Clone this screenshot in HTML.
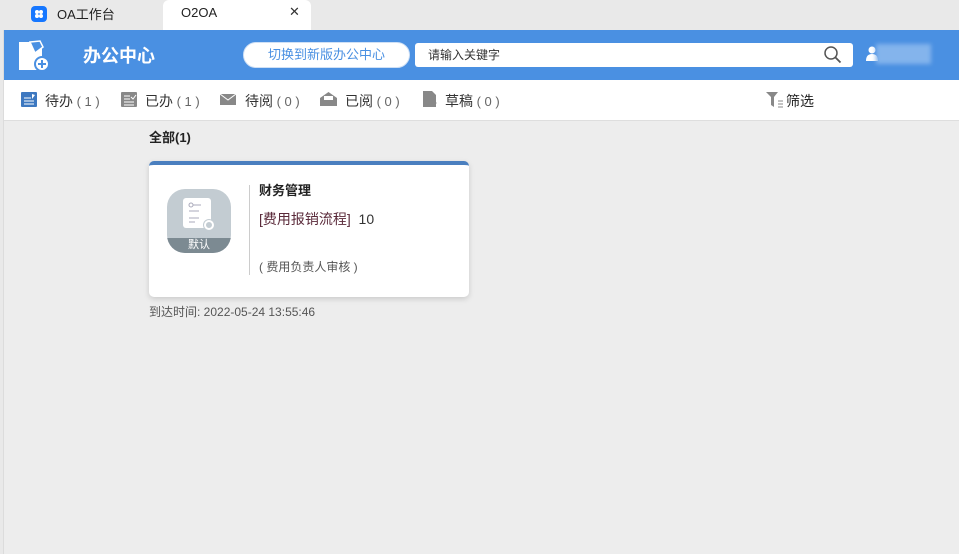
<!DOCTYPE html>
<html><head><meta charset="utf-8"><style>
*{margin:0;padding:0;box-sizing:border-box}
body{width:959px;height:554px;overflow:hidden;background:#e9e9e9;font-family:"Liberation Sans","Noto Sans CJK SC",sans-serif;position:relative}
.abs{position:absolute}
.tabbar{left:0;top:0;width:959px;height:30px;background:#e9e9e9}
.frame{left:3px;top:30px;width:956px;height:524px;background:#ededed;border-left:1px solid #dcdcdc}
.hdr{left:4px;top:30px;width:955px;height:50px;background:#4a90e2}
.tb{left:4px;top:80px;width:955px;height:41px;background:#fff;border-bottom:1px solid #dedede}
.ti{font-size:14px;color:#333;top:91px;white-space:pre}
.ti span{color:#666;font-size:13px}
</style></head><body>
<div class="abs tabbar"></div>
<div class="abs" style="left:31px;top:6px;width:16px;height:16px;background:#1677ff;border-radius:4px"><svg width="16" height="16"><circle cx="6" cy="6" r="2" fill="#fff"/><circle cx="10" cy="6" r="2" fill="#fff"/><circle cx="6" cy="10" r="2" fill="#fff"/><circle cx="10" cy="10" r="2" fill="#fff"/></svg></div>
<div class="abs" style="left:57px;top:4px;font-size:13px;color:#222">OA工作台</div>
<div class="abs" style="left:163px;top:0;width:148px;height:30px;background:#fff;border-radius:6px 6px 0 0"></div>
<div class="abs" style="left:181px;top:5px;font-size:13px;color:#222">O2OA</div>
<div class="abs" style="left:289px;top:4px;font-size:13px;color:#333">✕</div>
<div class="abs frame"></div>
<div class="abs hdr"></div>
<svg class="abs" style="left:18px;top:40px" width="32" height="32"><path d="M1 2h18l5 6v22H1z" fill="#fff"/><path d="M12 2l10-1 3 6-8 6z" fill="#4a90e2" stroke="#fff" stroke-width="1.5"/><circle cx="24" cy="24" r="7" fill="#fff" stroke="#4a90e2" stroke-width="2"/><path d="M20 24h8M24 20v8" stroke="#4a90e2" stroke-width="2"/></svg>
<div class="abs" style="left:83px;top:42px;font-size:18px;font-weight:bold;color:#fff">办公中心</div>
<div class="abs" style="left:243px;top:42px;width:167px;height:26px;background:#fff;border-radius:13px;border:1px solid #cfe0f5;color:#4a90e2;font-size:13px;text-align:center;line-height:24px">切换到新版办公中心</div>
<div class="abs" style="left:415px;top:43px;width:438px;height:24px;background:#fff;border-radius:3px;font-size:12px;color:#333;line-height:24px;padding-left:13px">请输入关键字</div>
<svg class="abs" style="left:823px;top:45px" width="20" height="20"><circle cx="8" cy="8" r="6" fill="none" stroke="#555" stroke-width="1.5"/><path d="M12.5 12.5l5 5" stroke="#555" stroke-width="1.8"/></svg>
<svg class="abs" style="left:866px;top:44px" width="12" height="18"><circle cx="6" cy="6" r="3.5" fill="#fff"/><path d="M0 17q0-7 6-7t6 7z" fill="#fff"/></svg>
<div class="abs" style="left:876px;top:44px;width:55px;height:20px;background:#84b4ec;filter:blur(2px)"></div>
<div class="abs tb"></div>
<svg class="abs" style="left:21px;top:92px" width="16" height="15"><rect width="16" height="15" rx="1" fill="#3d78c0"/><path d="M3 6h7M3 9h10M3 12h10" stroke="#fff"/><path d="M11 2l3 1-3 4z" fill="#fff"/></svg>
<div class="abs ti" style="left:45px">待办<span> ( 1 )</span></div>
<svg class="abs" style="left:121px;top:92px" width="16" height="15"><rect width="16" height="15" rx="1" fill="#888"/><path d="M3 4h6M3 7h6M3 10h10M3 13h10" stroke="#fff"/><path d="M10 5l2 2 3-4" stroke="#fff" fill="none"/></svg>
<div class="abs ti" style="left:145px">已办<span> ( 1 )</span></div>
<svg class="abs" style="left:220px;top:94px" width="16" height="11"><rect width="16" height="11" fill="#888"/><path d="M0 0l8 6 8-6" stroke="#fff" fill="none"/></svg>
<div class="abs ti" style="left:245px">待阅<span> ( 0 )</span></div>
<svg class="abs" style="left:320px;top:92px" width="17" height="14"><path d="M0 6l8.5-6 8.5 6v8H0z" fill="#888"/><rect x="4" y="4" width="9" height="4" fill="#fff"/></svg>
<div class="abs ti" style="left:345px">已阅<span> ( 0 )</span></div>
<svg class="abs" style="left:423px;top:91px" width="15" height="16"><path d="M0 0h9l4 4v12H0z" fill="#888"/><path d="M9 9l5 3-5 3z" fill="#888"/></svg>
<div class="abs ti" style="left:445px">草稿<span> ( 0 )</span></div>
<svg class="abs" style="left:766px;top:92px" width="18" height="16"><path d="M0 0h12l-4 5v10l-3-2V5z" fill="#888"/><path d="M12 9h5M12 12h5M12 15h5" stroke="#888"/></svg>
<div class="abs" style="left:786px;top:91px;font-size:14px;color:#222">筛选</div>
<div class="abs" style="left:149px;top:127px;font-size:13px;font-weight:bold;color:#222">全部(1)</div>
<div class="abs" style="left:149px;top:161px;width:320px;height:136px;background:#fff;border-radius:5px;border-top:4px solid #4a7fbf;box-shadow:0 2px 6px rgba(0,0,0,.15)"></div>
<div class="abs" style="left:167px;top:189px;width:64px;height:64px;border-radius:18px;background:#c3ccd2;overflow:hidden">
<div style="position:absolute;left:16px;top:9px;width:28px;height:30px;background:#fff;border-radius:3px"></div>
<svg style="position:absolute;left:16px;top:9px" width="40" height="40"><circle cx="8" cy="7" r="2" fill="none" stroke="#aab"/><path d="M10 7h8M6 13h10M6 20h10M6 24h6" stroke="#aab"/><circle cx="26" cy="27" r="6" fill="#c3ccd2"/><circle cx="26" cy="27" r="4" fill="none" stroke="#fff" stroke-width="2"/></svg>
<div style="position:absolute;left:0;bottom:0;width:64px;height:15px;background:#7c8a92;color:#fff;font-size:11px;text-align:center;line-height:15px">默认</div></div>
<div class="abs" style="left:249px;top:185px;width:1px;height:90px;background:#ccc"></div>
<div class="abs" style="left:259px;top:180px;font-size:13px;font-weight:bold;color:#222">财务管理</div>
<div class="abs" style="left:259px;top:209px;font-size:14px;color:#333"><span style="color:#5a2a3a">[费用报销流程]</span>&nbsp; 10</div>
<div class="abs" style="left:259px;top:258px;font-size:12px;color:#555">( 费用负责人审核 )</div>
<div class="abs" style="left:149px;top:303px;font-size:12px;color:#555">到达时间: 2022-05-24 13:55:46</div>
</body></html>
